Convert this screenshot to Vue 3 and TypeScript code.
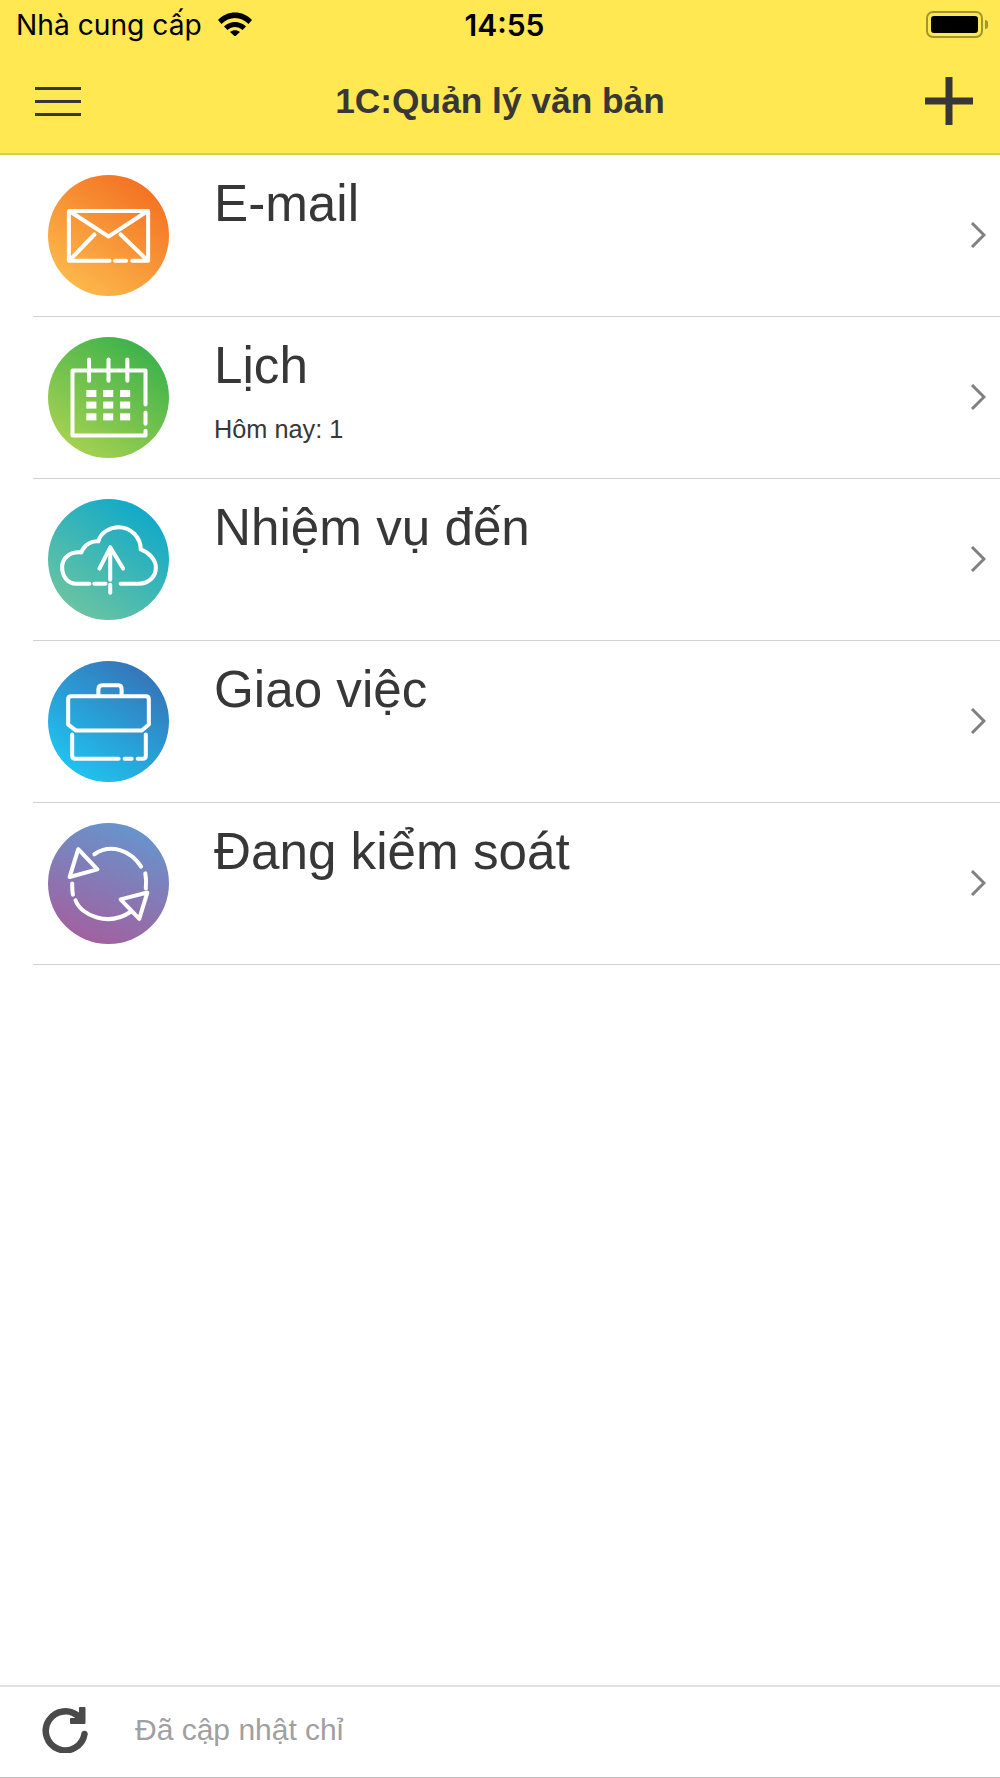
<script setup lang="ts">
type Item = {
  title: string;
  sub?: string;
  tone: string;
  paths: string[];
  cells?: number[][];
};

const cols = [38, 54.7, 71.5];
const lines = [52.5, 64, 75.7];

const items: Item[] = [
  {
    title: 'E-mail',
    tone: 'orange',
    paths: [
      'M61 85H20.7V35.7H99.3V85H83.5',
      'M66.5 85H77.5',
      'M23 37L60 61L97 37',
      'M22 84L46 59',
      'M72 59L98 84',
    ],
  },
  {
    title: 'Lịch',
    sub: 'Hôm nay: 1',
    tone: 'green',
    paths: [
      'M96.7 67V33.3H24.3V97.7H96.7V93',
      'M96.7 75V86',
      'M40.7 22.3V43.3',
      'M60 22.3V43.3',
      'M78.7 22.3V43.3',
    ],
    cells: lines.flatMap((y) => cols.map((x) => [x, y])),
  },
  {
    title: 'Nhiệm vụ đến',
    tone: 'teal',
    paths: [
      'M41 84H28C19 84 14 76 14 68C14 58 22 52 33 53C36 45 44 41 50 42C52 33 62 28 70 28C82 28 92 38 92 50C100 53 107 60 107 68C107 77 100 84 90 84H72',
      'M46 84H57',
      'M61.7 48V80',
      'M61.7 85V93',
      'M51 69L61.7 48L74.5 69',
    ],
  },
  {
    title: 'Giao việc',
    tone: 'blue',
    paths: [
      'M50 33V28Q50 24 54 24H70Q73 24 73 28V33',
      'M23 35H97Q100 35 100 38V63L93 69H28L20 63V38Q20 35 23 35Z',
      'M24 73V94Q24 97 27 97H70',
      'M76 97H83',
      'M89 97H94Q97 97 97 94V73',
    ],
  },
  {
    title: 'Đang kiểm soát',
    tone: 'purple',
    paths: [
      'M30 26L49 46L21.5 53.5Z',
      'M46 31C62 20 82 27 92.3 43.3',
      'M96.5 50C97.5 55 97.5 60 97 65',
      'M24 60C24 64 24 68 24.7 71',
      'M27.3 76.7C33 92 60 103 81.7 88.3',
      'M98.5 69L72 75.7L90.500 95Z',
    ],
  },
];
</script>

<template>
  <div class="page">
    <header class="top">
      <div class="status">
        <div class="carrier">
          <span>Nhà cung cấp</span>
          <svg class="wifi" viewBox="0 0 34 24" width="34" height="24">
            <path d="M0 8C9-2 25-2 34 8L30.5 12C23 4 11 4 3.500 12Z" />
            <path d="M6 14.500C12 8.500 22 8.500 28 14.500L24.500 18C20 14 14 14 9.500 18Z" />
            <path d="M12 20C15 17.500 19 17.500 22 20L17 24.500Z" />
          </svg>
        </div>
        <div class="clock">14:55</div>
        <div class="power">
          <div class="battery"><div class="charge"></div></div>
          <div class="nub"></div>
        </div>
      </div>
      <div class="nav">
        <button class="burger" type="button"><i></i><i></i><i></i></button>
        <h1 class="heading">1C:Quản lý văn bản</h1>
        <svg class="plus" viewBox="0 0 48 48" width="48" height="48">
          <path d="M24 0V48M0 24H48" />
        </svg>
      </div>
    </header>

    <main class="list">
      <div v-for="item in items" :key="item.title" class="row">
        <div class="badge" :class="item.tone">
          <svg viewBox="0 0 120 120" width="121" height="121">
            <path v-for="d in item.paths" :key="d" :d="d" class="line" />
            <rect
              v-for="c in item.cells"
              :key="c.join()"
              :x="c[0]"
              :y="c[1]"
              width="10"
              height="7"
              fill="#fff"
            />
          </svg>
        </div>
        <div class="copy">
          <div class="title">{{ item.title }}</div>
          <div v-if="item.sub" class="sub">{{ item.sub }}</div>
        </div>
        <svg class="chevron" viewBox="0 0 16 28" width="16" height="28">
          <path d="M2 2L14 14L2 26" />
        </svg>
      </div>
    </main>

    <footer class="foot">
      <svg class="reload" viewBox="0 0 46 46" width="46" height="46">
        <path class="arc" d="M42.500 27A19.500 19.500 0 1 1 37 10" />
        <path class="tip" d="M42.500 1V16H29V12H38V1Z" />
      </svg>
      <span class="updated">Đã cập nhật chỉ</span>
    </footer>
  </div>
</template>

<style>
html,
body {
  margin: 0;
  background: #fff;
}
</style>

<style scoped>
.page {
  display: flex;
  flex-direction: column;
  height: 1778px;
  font-family: 'Liberation Sans', Arial, sans-serif;
  color: #373737;
  overflow: hidden;
}

.top {
  background: #ffe851;
  border-bottom: 2px solid #ddcb48;
  height: 153px;
}

.status {
  display: grid;
  grid-template-columns: 1fr auto 1fr;
  align-items: center;
  height: 50px;
  padding: 0 12px 0 16px;
  font-family: Inter, 'Noto Sans', sans-serif;
  color: #000;
}

.carrier {
  display: flex;
  align-items: center;
  gap: 16px;
  font-size: 28.2px;
}

.wifi {
  fill: #000;
  margin-top: -2px;
}

.clock {
  font-size: 30px;
  font-weight: 600;
  margin-left: 5px;
}

.power {
  display: flex;
  align-items: center;
  justify-content: flex-end;
  gap: 2px;
  margin-top: -2px;
}

.battery {
  box-sizing: border-box;
  width: 57px;
  height: 27px;
  border: 2px solid #a3962f;
  border-radius: 7px;
  padding: 3px;
}

.charge {
  height: 100%;
  background: #000;
  border-radius: 3px;
}

.nub {
  width: 3px;
  height: 9px;
  background: #a3962f;
  border-radius: 0 3px 3px 0;
}

.nav {
  display: flex;
  align-items: center;
  justify-content: space-between;
  height: 102px;
  padding: 0 27px 0 35px;
}

.burger {
  display: flex;
  flex-direction: column;
  gap: 10px;
  width: 46px;
  padding: 0;
  border: 0;
  background: none;
}

.burger i {
  display: block;
  height: 3px;
  background: #373737;
}

.heading {
  margin: 0 6px 0 0;
  font-size: 35.3px;
  font-weight: 700;
  color: #373737;
}

.plus path {
  fill: none;
  stroke: #373737;
  stroke-width: 7;
}

.list {
  flex: 1;
}

.row {
  display: flex;
  align-items: flex-start;
  box-sizing: border-box;
  height: 162px;
  margin-left: 33px;
  padding: 20px 14px 0 15px;
  border-bottom: 1px solid #d2d2d2;
}

.badge {
  flex: none;
  width: 121px;
  height: 121px;
  border-radius: 50%;
}

.badge svg {
  display: block;
}

.line {
  fill: none;
  stroke: #fff;
  stroke-width: 4;
  stroke-linecap: round;
  stroke-linejoin: round;
}

.orange {
  background: linear-gradient(35deg, #fdbb4d 10%, #f36f21 90%);
}

.green {
  background: linear-gradient(35deg, #a9d251 10%, #38b14a 90%);
}

.teal {
  background: linear-gradient(35deg, #6dc5a0 10%, #0da8cb 90%);
}

.blue {
  background: linear-gradient(35deg, #1fc6f2 10%, #3672b7 90%);
}

.purple {
  background: linear-gradient(200deg, #5f9bd2 0%, #a2609f 90%);
}

.copy {
  flex: 1;
  margin-left: 45px;
}

.title {
  font-size: 51.2px;
  line-height: 58px;
}

.sub {
  margin-top: 20px;
  font-size: 25.3px;
  line-height: 28px;
}

.chevron {
  margin-top: 46px;
}

.chevron path {
  fill: none;
  stroke: #808080;
  stroke-width: 3;
}

.foot {
  display: flex;
  align-items: center;
  gap: 47px;
  box-sizing: border-box;
  height: 93px;
  padding-left: 42px;
  border-top: 2px solid #e2e2e2;
  border-bottom: 1px solid #bdbdbd;
}

.reload {
  fill: none;
  stroke: #4a4a4a;
  margin-top: -4px;
}

.arc {
  stroke-width: 6.500;
  stroke-linecap: round;
}

.tip {
  fill: #4a4a4a;
  stroke-width: 2;
  stroke-linejoin: round;
}

.updated {
  font-size: 30px;
  color: #a0a0a0;
  margin-top: -5px;
}
</style>
